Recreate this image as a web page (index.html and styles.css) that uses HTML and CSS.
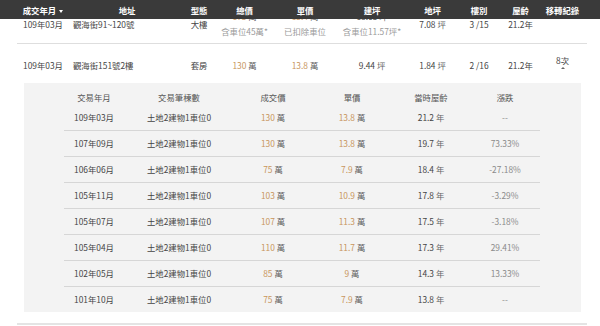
FILE: index.html
```html
<!DOCTYPE html>
<html lang="zh-Hant">
<head>
<meta charset="utf-8">
<link rel="stylesheet" href="styles.css">
</head>
<body>
<div class="thead">
  <div class="wrap cols">
    <div class="c">成交年月<span class="caret"></span></div>
    <div class="c">地址</div>
    <div class="c">型態</div>
    <div class="c">總價</div>
    <div class="c">單價</div>
    <div class="c">建坪</div>
    <div class="c">地坪</div>
    <div class="c">樓別</div>
    <div class="c">屋齡</div>
    <div class="c">移轉紀錄</div>
  </div>
</div>

<div class="viewport">
<div class="list">
  <div class="wrap item row1">
    <div class="cols">
      <div class="c">109年03月</div>
      <div class="addr">觀海街91~120號</div>
      <div class="c">大樓</div>
      <div class="c"><div><span class="num">175</span> <span class="u">萬</span></div><div class="sub">含車位45萬*</div></div>
      <div class="c"><div><span class="num">15.4</span> <span class="u">萬</span></div><div class="sub">已扣除車位</div></div>
      <div class="c"><div>18.65 <span class="u">坪</span></div><div class="sub">含車位11.57坪*</div></div>
      <div class="c">7.08 <span class="u">坪</span></div>
      <div class="c">3 /15</div>
      <div class="c">21.2年</div>
      <div class="c"></div>
    </div>
  </div>

  <div class="wrap item row2">
    <div class="cols main">
      <div class="c">109年03月</div>
      <div class="addr">觀海街151號2樓</div>
      <div class="c">套房</div>
      <div class="c"><span class="num">130</span> <span class="u">萬</span></div>
      <div class="c"><span class="num">13.8</span> <span class="u">萬</span></div>
      <div class="c">9.44 <span class="u">坪</span></div>
      <div class="c">1.84 <span class="u">坪</span></div>
      <div class="c">2 /16</div>
      <div class="c">21.2年</div>
      <div class="c times"><span class="tlabel">8次</span><span class="up"></span></div>
    </div>

    <div class="panel">
      <div class="pcols phead">
        <div>交易年月</div>
        <div>交易筆棟數</div>
        <div>成交價</div>
        <div>單價</div>
        <div>當時屋齡</div>
        <div>漲跌</div>
      </div>
      <div class="pcols prow">
        <div>109年03月</div><div>土地2建物1車位0</div>
        <div><span class="num">130</span> <span class="u">萬</span></div>
        <div><span class="num">13.8</span> <span class="u">萬</span></div>
        <div>21.2 <span class="u">年</span></div>
        <div class="pct">--</div>
      </div>
      <div class="pcols prow">
        <div>107年09月</div><div>土地2建物1車位0</div>
        <div><span class="num">130</span> <span class="u">萬</span></div>
        <div><span class="num">13.8</span> <span class="u">萬</span></div>
        <div>19.7 <span class="u">年</span></div>
        <div class="pct">73.33%</div>
      </div>
      <div class="pcols prow">
        <div>106年06月</div><div>土地2建物1車位0</div>
        <div><span class="num">75</span> <span class="u">萬</span></div>
        <div><span class="num">7.9</span> <span class="u">萬</span></div>
        <div>18.4 <span class="u">年</span></div>
        <div class="pct">-27.18%</div>
      </div>
      <div class="pcols prow">
        <div>105年11月</div><div>土地2建物1車位0</div>
        <div><span class="num">103</span> <span class="u">萬</span></div>
        <div><span class="num">10.9</span> <span class="u">萬</span></div>
        <div>17.8 <span class="u">年</span></div>
        <div class="pct">-3.29%</div>
      </div>
      <div class="pcols prow">
        <div>105年07月</div><div>土地2建物1車位0</div>
        <div><span class="num">107</span> <span class="u">萬</span></div>
        <div><span class="num">11.3</span> <span class="u">萬</span></div>
        <div>17.5 <span class="u">年</span></div>
        <div class="pct">-3.18%</div>
      </div>
      <div class="pcols prow">
        <div>105年04月</div><div>土地2建物1車位0</div>
        <div><span class="num">110</span> <span class="u">萬</span></div>
        <div><span class="num">11.7</span> <span class="u">萬</span></div>
        <div>17.3 <span class="u">年</span></div>
        <div class="pct">29.41%</div>
      </div>
      <div class="pcols prow">
        <div>102年05月</div><div>土地2建物1車位0</div>
        <div><span class="num">85</span> <span class="u">萬</span></div>
        <div><span class="num">9</span> <span class="u">萬</span></div>
        <div>14.3 <span class="u">年</span></div>
        <div class="pct">13.33%</div>
      </div>
      <div class="pcols prow">
        <div>101年10月</div><div>土地2建物1車位0</div>
        <div><span class="num">75</span> <span class="u">萬</span></div>
        <div><span class="num">7.9</span> <span class="u">萬</span></div>
        <div>13.8 <span class="u">年</span></div>
        <div class="pct">--</div>
      </div>
    </div>
  </div>
</div>
</div>
</body>
</html>
```

FILE: styles.css
```css
* { box-sizing: border-box; }

body {
  margin: 0;
  font-family: "Noto Sans CJK TC", "Noto Sans", sans-serif;
  font-size: 8.4px;
  color: #444;
  background: #fff;
}

.wrap {
  width: 570px;
  margin-left: 17px;
}

.cols {
  display: grid;
  grid-template-columns: 52px 116px 28px 63px 58px 76px 45px 48px 35px 49px;
  align-items: center;
}

.c { text-align: center; }

.addr { padding-left: 4px; white-space: nowrap; }

.thead {
  height: 19px;
  background: #3a3a3a;
  color: #fff;
  font-weight: bold;
  display: flex;
  align-items: center;
}

.caret {
  display: inline-block;
  width: 0;
  height: 0;
  margin-left: 3px;
  vertical-align: middle;
  border-left: 2.5px solid transparent;
  border-right: 2.5px solid transparent;
  border-top: 3px solid #fff;
}

/* scrolled list area below the sticky header */
.viewport {
  height: 307px;
  overflow: hidden;
}

.list { margin-top: -15px; }

.item { line-height: 15px; }

.row1 {
  padding: 5px 0 4px;
  border-bottom: 1px solid #dedede;
}

.row2 {
  padding-bottom: 11px;
  border-bottom: 2px solid #e4e4e4;
}

.row2 .main { padding: 13.5px 0 10.5px; }

.num { color: #c8955c; }
.u { color: #666; }
.sub { color: #9a9a9a; }

.times {
  display: flex;
  flex-direction: column;
  align-items: center;
  line-height: 10px;
}
.tlabel { margin-top: -6px; }
.up {
  width: 0;
  height: 0;
  margin-top: 2px;
  border-left: 2px solid transparent;
  border-right: 2px solid transparent;
  border-bottom: 2.5px solid #666;
}

.panel {
  margin: 0 6px 0 7px;
  background: #f3f3f3;
  padding: 6px 41px 0 40px;
}

.pcols {
  display: grid;
  grid-template-columns: 60px 110px 78px 80px 78px 1fr;
  text-align: center;
  align-items: center;
}

.phead {
  height: 16px;
  line-height: 16px;
  color: #555;
}

.prow {
  height: 26px;
  line-height: 25px;
  border-bottom: 1px solid #d6d6d6;
}
.prow:last-child { border-bottom: 0; height: 25px; }

.pct { color: #8a8a8a; }
```
